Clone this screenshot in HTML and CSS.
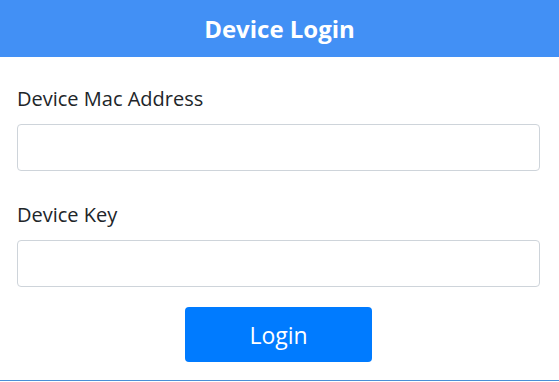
FILE: index.html
```html
<!DOCTYPE html>
<html lang="en">
<head>
    <meta charset="UTF-8">
    <meta name="viewport" content="width=device-width, initial-scale=1.0">
    <title>Device Login</title>
    <link rel="stylesheet" href="styles.css">
</head>
<body>
    <div class="login-container">
        <div class="login-header">Device Login</div>

        <form class="login-form">
            <div class="form-group">
                <label for="mac">Device Mac Address</label>
                <input type="text" id="mac" class="form-input">
            </div>

            <div class="form-group">
                <label for="key">Device Key</label>
                <input type="password" id="key" class="form-input">
            </div>

            <div class="form-actions">
                <button type="button" class="login-btn">Login</button>
            </div>
        </form>
    </div>
</body>
</html>
```

FILE: styles.css
```css
body {
    margin: 0;
    font-family: "Open Sans", "Noto Sans", Arial, sans-serif;
    color: #212529;
}

.login-container {
    height: 380px;
    border-bottom: 1px solid #4a8fd6;
}

.login-header {
    height: 57px;
    line-height: 57px;
    background: #4290f5;
    color: #fff;
    text-align: center;
    font-size: 24px;
    font-weight: bold;
}

.login-form {
    padding: 27px 19px 0 17px;
}

.form-group {
    margin-bottom: 29px;
}

.form-group + .form-group {
    margin-bottom: 20px;
}

.form-group label {
    display: block;
    font-size: 20px;
    line-height: 30px;
    margin-bottom: 10px;
}

.form-input {
    display: block;
    box-sizing: border-box;
    width: 100%;
    height: 47px;
    border: 1px solid #ced4da;
    border-radius: 4px;
    padding: 6px 12px;
    font-size: 18px;
}

.form-actions {
    display: flex;
    justify-content: center;
}

.login-btn {
    width: 187px;
    height: 55px;
    background: #007bff;
    color: #fff;
    border: none;
    border-radius: 4px;
    font-family: inherit;
    font-size: 23px;
    cursor: pointer;
}
```
